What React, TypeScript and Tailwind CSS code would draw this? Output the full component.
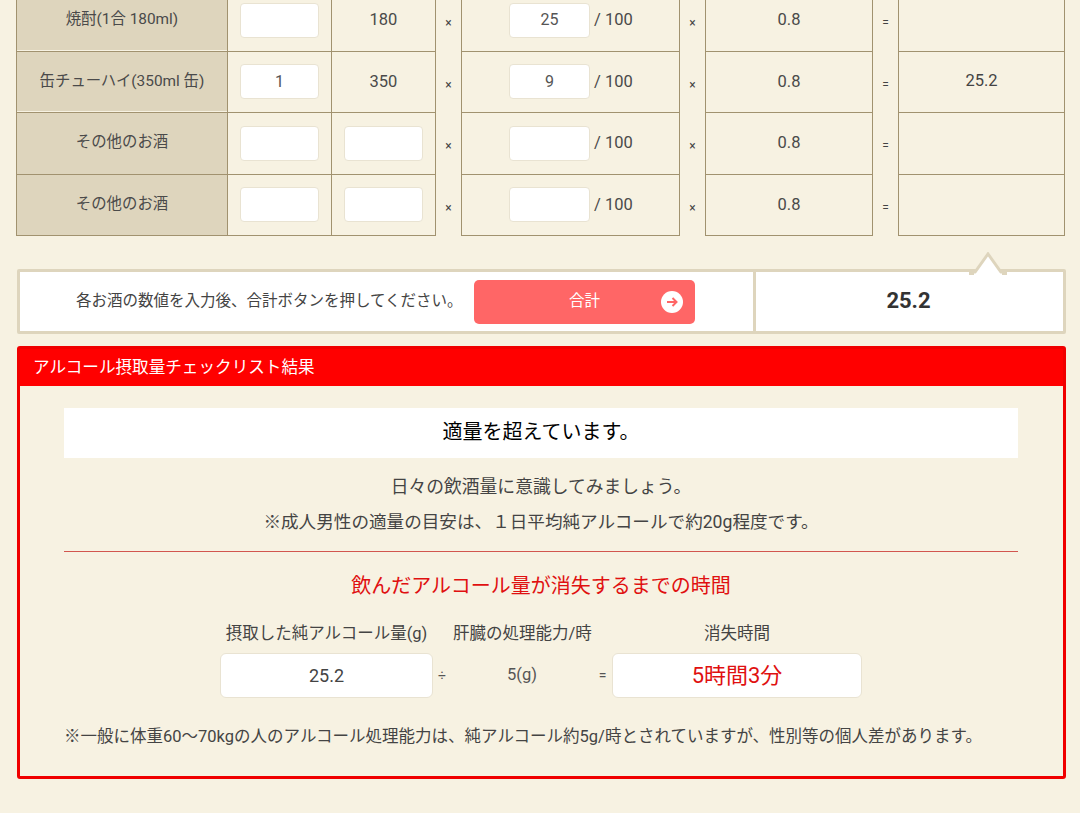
import React from "react";

const LINE = "border-[#a1926f]";

function Box({ value, className = "" }: { value?: string; className?: string }) {
  return (
    <div
      className={`h-[35px] rounded-[4px] border border-[#e9e3d2] bg-white flex items-center justify-center text-[16px] text-[#555] ${className}`}
    >
      {value}
    </div>
  );
}

type Row = { label: string; qty?: string; ml?: string; pct?: string; result?: string; lit?: boolean };

const rows: Row[] = [
  { label: "焼酎(1合 180ml)", ml: "180", pct: "25", lit: true },
  { label: "缶チューハイ(350ml 缶)", qty: "1", ml: "350", pct: "9", result: "25.2", lit: true },
  { label: "その他のお酒" },
  { label: "その他のお酒" },
];

function Op({ children }: { children: React.ReactNode }) {
  return <div className="flex items-center justify-center pt-[5px] text-[12px] text-[#444]">{children}</div>;
}

function TableRow({ r }: { r: Row }) {
  const cell = `border-b-[1px] ${LINE} flex items-center justify-center`;
  return (
    <div className="grid h-[61.5px] grid-cols-[211px_104px_105px_25px_219px_25px_168px_25px_167px] text-[15.5px] text-[#4a4a4a]">
      <div
        className={`${cell} border-l-[1px] bg-[#ded5bd] pb-[1px] text-[15.4px] ${r.lit ? "shadow-[inset_0_-1px_0_#f7f2e2]" : ""}`}
      >
        {r.label}
      </div>
      <div className={`${cell} border-l-[1px]`}>
        <Box value={r.qty} className="w-[79px]" />
      </div>
      <div className={`${cell} border-x-[1px]`}>
        {r.ml ? <span className="pt-[1px] text-[16.5px]">{r.ml}</span> : <Box className="w-[79px]" />}
      </div>
      <Op>×</Op>
      <div className={`${cell} border-x-[1px] pl-[47px] !justify-start`}>
        <Box value={r.pct} className="w-[81px]" />
        <span className="ml-[4px] pt-[1px] text-[16.5px]">/ 100</span>
      </div>
      <Op>×</Op>
      <div className={`${cell} border-x-[1px] pt-[1px] text-[16.5px]`}>0.8</div>
      <Op>=</Op>
      <div className={`${cell} border-x-[1px] text-[16.5px] text-[#444]`}>{r.result}</div>
    </div>
  );
}

export default function App() {
  return (
    <div
      className="h-[813px] overflow-hidden bg-[#f7f2e2] text-[#444]"
      style={{ fontFamily: 'Roboto, "Noto Sans CJK JP", sans-serif' }}
    >
      <div className="-mt-[10px] px-[16px]">
        <div className="w-[1050px]">
          {rows.map((r, i) => (
            <TableRow key={i} r={r} />
          ))}
        </div>

        <div className="relative ml-[1px] mt-[33px] flex h-[65px] w-[1049px] rounded-[2px] border-[3px] border-[#ded5bd] bg-white">
          <svg className="absolute -top-[20px] right-[56px] h-[23px] w-[38px]" viewBox="0 0 38 23" aria-hidden="true">
            <path d="M0 21.5h5L19 2l14 19.5h5" fill="#fff" stroke="#ded5bd" strokeWidth="3" />
            <path d="M5 23h28v-1.5H5z" fill="#fff" />
          </svg>
          <div className="flex w-[736px] items-center border-r-[3px] border-[#ded5bd]">
            <span className="ml-[56px] w-[398px] text-[15.5px] text-[#444]">各お酒の数値を入力後、合計ボタンを押してください。</span>
            <button className="relative flex h-[44px] w-[221px] items-center justify-center rounded-[5px] bg-[#ff6666] text-[15.5px] text-white">
              合計
              <span className="absolute right-[12px] top-[11px] flex h-[22px] w-[22px] items-center justify-center rounded-full bg-white">
                <svg className="h-[14px] w-[14px]" viewBox="0 0 14 14" fill="none" stroke="#ff6666" strokeWidth="2" aria-hidden="true">
                  <path d="M2 7h9M7.5 3l4 4-4 4" />
                </svg>
              </span>
            </button>
          </div>
          <div className="flex flex-1 items-center justify-center pb-[2px] pr-[2px] text-[22px] font-bold text-[#333]">25.2</div>
        </div>

        <div className="ml-[1px] mt-[12px] h-[433px] w-[1049px] rounded-[3px] border-[3px] border-[#f00000]">
          <div className="flex h-[37px] items-center bg-[#ff0000] pl-[13px] pt-[1px] text-[16.6px] text-white">アルコール摂取量チェックリスト結果</div>
          <div className="pl-[44px] pr-[45px] pt-[22px]">
            <div className="flex h-[50px] items-center justify-center bg-white pb-[2px] text-[20px] text-black">適量を超えています。</div>
            <p className="mt-[18px] text-center text-[17.8px] leading-[22px]">日々の飲酒量に意識してみましょう。</p>
            <p className="mt-[13px] text-center text-[17.6px] leading-[22px]">※成人男性の適量の目安は、１日平均純アルコールで約20g程度です。</p>
            <div className="mt-[18px] h-px bg-[#d2564e]" />
            <h2 className="mt-[19px] text-center text-[20px] leading-[30px] text-[#e01010]">飲んだアルコール量が消失するまでの時間</h2>

            <div className="ml-[156px] mt-[20px] grid grid-cols-[213px_18px_142px_19px_250px] grid-rows-[26px_45px] gap-y-[6px]">
              <div className="whitespace-nowrap text-center text-[16.5px] leading-[26px]">摂取した純アルコール量(g)</div>
              <div className="col-span-2 whitespace-nowrap pl-[20px] text-[16.5px] leading-[26px]">肝臓の処理能力/時</div>
              <div />
              <div className="text-center text-[16.5px] leading-[26px]">消失時間</div>
              <div className="flex items-center justify-center rounded-[6px] border border-[#e9e3d2] bg-white text-[18px]">25.2</div>
              <div className="flex items-center justify-center text-[14px] text-[#555]">÷</div>
              <div className="flex items-center justify-center text-[16.5px] text-[#555]">5(g)</div>
              <div className="flex items-center justify-center text-[14px] text-[#555]">=</div>
              <div className="flex items-center justify-center rounded-[6px] border border-[#e9e3d2] bg-white text-[22px] text-[#e01010]">5時間3分</div>
            </div>

            <p className="mt-[27px] whitespace-nowrap text-[16.5px] leading-[24px]">※一般に体重60〜70kgの人のアルコール処理能力は、純アルコール約5g/時とされていますが、性別等の個人差があります。</p>
          </div>
        </div>
      </div>
    </div>
  );
}
